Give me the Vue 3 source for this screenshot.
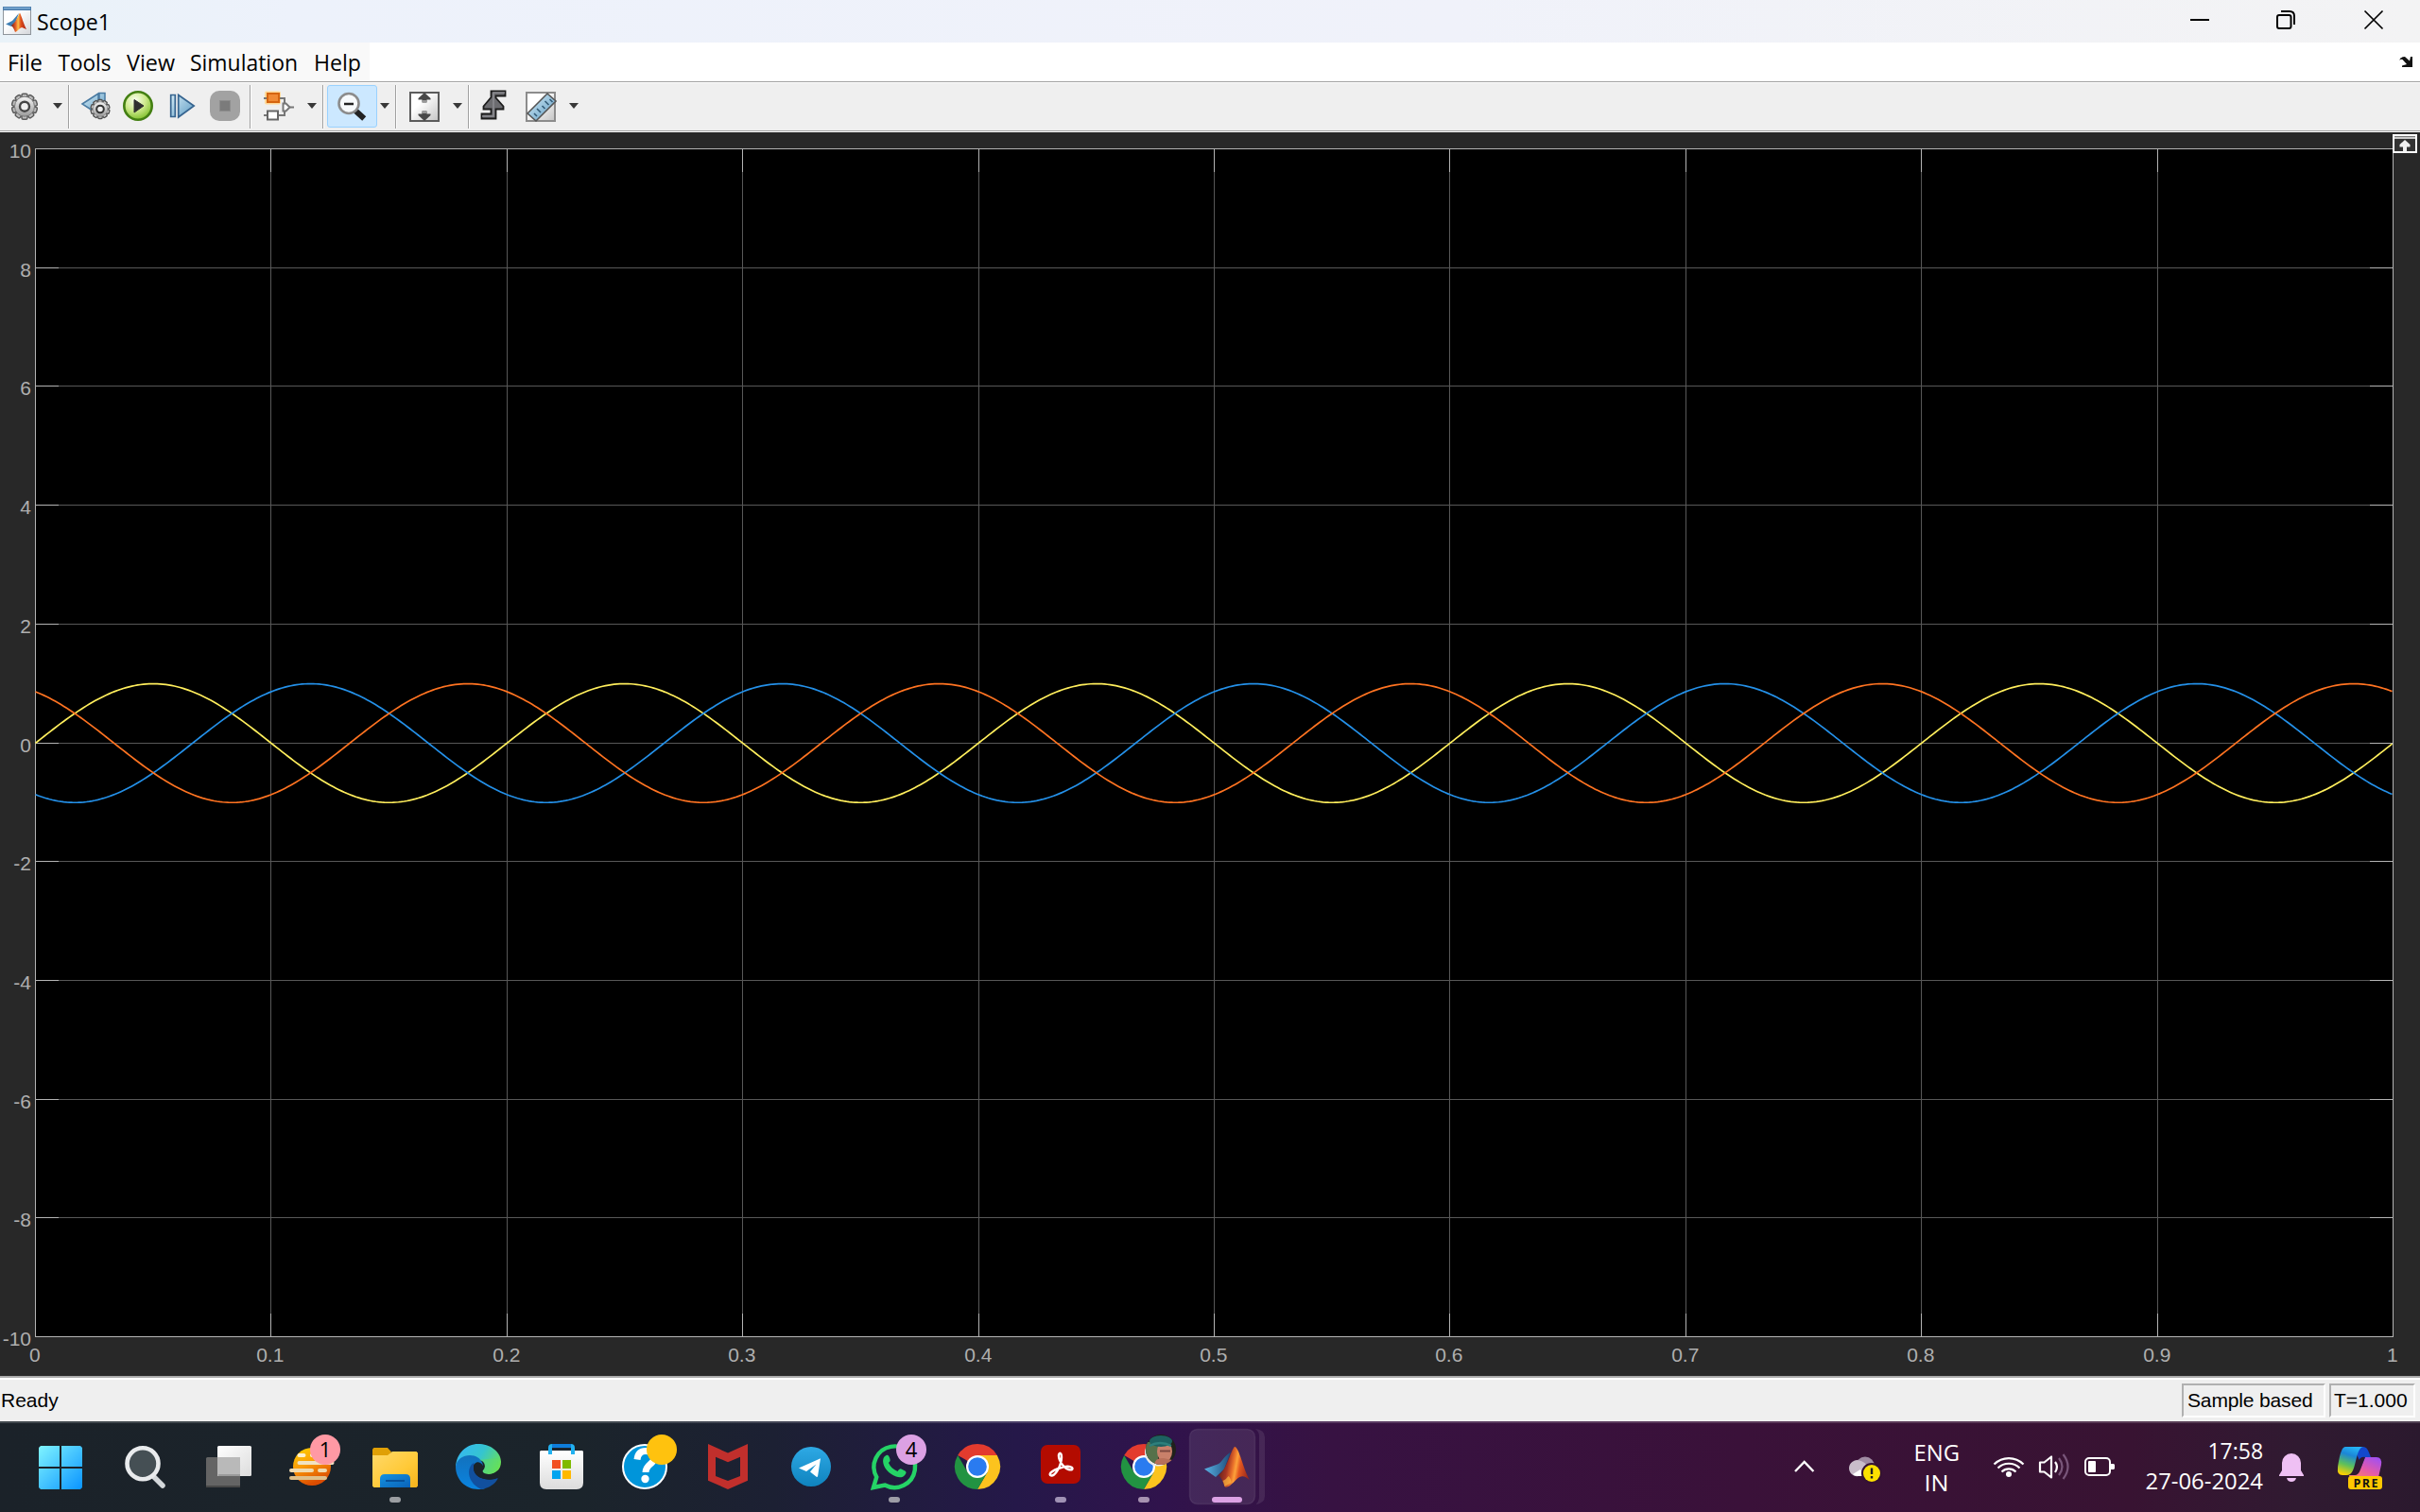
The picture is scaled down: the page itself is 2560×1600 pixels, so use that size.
<script setup>
const menus = [
  { label: 'File', x: 8, width: 60, len: 37 },
  { label: 'Tools', x: 1.5, width: 72, len: 56 },
  { label: 'View', x: 2, width: 69, len: 51 },
  { label: 'Simulation', x: 0, width: 131, len: 114 },
  { label: 'Help', x: 0, width: 59, len: 50 },
]

const left = 37
const right = 2531
const top = 17
const bottom = 1274
const mid = (top + bottom) / 2 + 0.9
const unit = (bottom - top) / 20

const xTicks = Array.from({ length: 11 }, (_, i) => ({
  x: Math.floor(left + 0.5 + i * 249.4) + 0.5,
  label: i === 0 ? '0' : i === 10 ? '1' : `0.${i}`,
}))
const yTicks = Array.from({ length: 11 }, (_, i) => ({
  y: Math.round(top + i * 2 * unit) + 0.5,
  label: String(10 - i * 2),
}))

function wave(phase) {
  const pts = []
  for (let x = 0; x <= right - left; x += 3) {
    const t = x / (right - left)
    const y = mid - unit * Math.sin(2 * Math.PI * 5 * t + phase)
    pts.push(`${(left + 0.5 + x).toFixed(1)},${y.toFixed(2)}`)
  }
  return pts.join(' ')
}
const waves = [
  { color: '#ffee5c', points: wave(0) },
  { color: '#2490e8', points: wave((-2 * Math.PI) / 3) },
  { color: '#ff7321', points: wave((2 * Math.PI) / 3) },
]
const teeth = Array.from({ length: 10 }, (_, i) => i * 36)
</script>

<template>
  <div class="screen">
    <header class="title">
      <svg class="app-icon" width="32" height="45" viewBox="2 0 32 45">
        <defs>
          <linearGradient id="win" x1="0" y1="0" x2="1" y2="1"><stop offset=".4" stop-color="#fff" /><stop offset="1" stop-color="#d4d6da" /></linearGradient>
          <linearGradient id="peak" x1="0" y1="0" x2="1" y2="0"><stop offset="0" stop-color="#7c1a10" /><stop offset=".3" stop-color="#e8622a" /><stop offset=".45" stop-color="#fbc04a" /><stop offset=".62" stop-color="#e0501c" /><stop offset="1" stop-color="#a81d12" /></linearGradient>
        </defs>
        <rect x="3.5" y="7.5" width="29" height="29" fill="url(#win)" stroke="#8f959b" />
        <rect x="3" y="7" width="30" height="4" fill="#4d7fae" /><rect x="4" y="8" width="28" height="1.3" fill="#7fb0d8" />
        <path d="M6 25.500l7-3.500 7-8-5 13-3 1z" fill="#3c7db2" />
        <path d="M12 27l4-4 5-9.500c2 4 4 12 7 17.500l-5-2c-3 1-4 4-7 5-1-3-2-5-4-7z" fill="url(#peak)" />
      </svg>
      <svg width="100" height="45"><text class="segoe" x="5" y="32" font-size="23.500" textLength="78" lengthAdjust="spacingAndGlyphs">Scope1</text></svg>
      <div class="grow"></div>
      <svg width="260" height="45" viewBox="2300 0 260 45" fill="none" stroke="#000" stroke-width="2">
        <path d="M2317 21h20" />
        <rect x="2409" y="16" width="14.500" height="14" rx="2" />
        <path d="M2413 12h9q5 0 5 5v9" />
        <path d="M2501.500 11.500l19 19M2520.500 11.500l-19 19" stroke-width="1.700" />
      </svg>
    </header>

    <nav class="menu">
      <div class="menu-items">
        <svg v-for="m in menus" :key="m.label" :width="m.width" height="41">
          <text class="segoe" :x="m.x" y="30" font-size="23.500" :textLength="m.len" lengthAdjust="spacingAndGlyphs">{{ m.label }}</text>
        </svg>
      </div>
      <svg width="32" height="41" viewBox="2528 45 32 41">
        <path d="M2538 64q1-4 6-4l5 4.500 1-4.500h2v11h-11v-1.500l5-1.500-4.500-5q-2-1-3.500 1z" fill="#111" />
      </svg>
    </nav>

    <div class="toolbar">
      <svg width="50" height="50" viewBox="0 88 50 50">
        <defs>
          <linearGradient id="metal" x1="0" y1="0" x2="0" y2="1"><stop offset="0" stop-color="#f5f5f5" /><stop offset="1" stop-color="#9a9a9a" /></linearGradient>
          <linearGradient id="sky" x1="0" y1="0" x2="1" y2="1"><stop offset="0" stop-color="#d3eaf5" /><stop offset="1" stop-color="#5e9cc4" /></linearGradient>
          <linearGradient id="box" x1="0" y1="0" x2="1" y2="1"><stop offset=".35" stop-color="#fff" /><stop offset="1" stop-color="#c4c4c4" /></linearGradient>
          <radialGradient id="green" cx=".4" cy=".3" r=".75"><stop offset="0" stop-color="#fbfff0" /><stop offset=".5" stop-color="#cde98b" /><stop offset="1" stop-color="#77bb22" /></radialGradient>
        </defs>
        <g transform="translate(26 112.700)">
          <rect v-for="a in teeth" :key="a" x="-3" y="-13.500" width="6" height="7" rx="1.500" fill="#bdbdbd" stroke="#5c5c5c" stroke-width="1.500" :transform="`rotate(${a})`" />
          <circle r="10.500" fill="url(#metal)" stroke="#777" stroke-width="1" />
          <circle r="5" fill="#efefef" stroke="#444" stroke-width="2.400" />
        </g>
      </svg>
      <div class="drop w22"><i></i></div>
      <div class="sep"></div>
      <svg width="50" height="50" viewBox="74 88 50 50">
        <path d="M87 110l17-11v22zM105 98.500h6v20h-6z" fill="url(#sky)" stroke="#4a7ba3" stroke-width="1.500" />
        <g transform="translate(106 115.500)">
          <rect v-for="a in teeth" :key="a" x="-2.200" y="-10" width="4.400" height="5" rx="1" fill="#ccc" stroke="#505050" stroke-width="1.300" :transform="`rotate(${a})`" />
          <circle r="7.800" fill="url(#metal)" stroke="#888" stroke-width=".8" />
          <circle r="3.800" fill="#efefef" stroke="#333" stroke-width="2" />
        </g>
      </svg>
      <svg width="44" height="50" viewBox="124 88 44 50">
        <circle cx="146" cy="112" r="14.700" fill="url(#green)" stroke="#437f12" stroke-width="2.600" />
        <path d="M142 105.500l10 6.500-10 7z" fill="#303030" stroke="#303030" stroke-width="1" />
      </svg>
      <svg width="46" height="50" viewBox="168 88 46 50">
        <path d="M180.700 100.500h4.600v23h-4.600zM188.700 100.500l16.500 11.500-16.500 12z" fill="url(#sky)" stroke="#36648f" stroke-width="1.700" />
      </svg>
      <svg width="50" height="50" viewBox="214 88 50 50">
        <rect x="222" y="96" width="32" height="32" rx="10" fill="#a2a2a2" />
        <rect x="232.500" y="106.500" width="11" height="11" fill="#7b7b7b" stroke="#8d8d8d" />
      </svg>
      <div class="sep"></div>
      <svg width="53" height="50" viewBox="266 88 53 50" fill="none">
        <rect x="280" y="96.500" width="17" height="14" rx="2" fill="#ffd896" />
        <path d="M279 104h4M295 104h6v6M279 122h4M295 122h6v-6M306 113.500h5" stroke="#777" stroke-width="2" />
        <rect x="283" y="99" width="12" height="9" fill="#f08a35" stroke="#d56410" stroke-width="2" />
        <rect x="283" y="117.500" width="11" height="9" fill="#fff" stroke="#666" stroke-width="2" />
        <path d="M299.500 109.500h3l4 4-4 4h-3z" fill="#fff" stroke="#777" stroke-width="2" />
      </svg>
      <div class="drop w22"><i></i></div>
      <div class="sep"></div>
      <div class="pressed">
        <svg width="51" height="43" viewBox="347 91 51 43">
          <path d="M377 118l6 5.500" stroke="#222" stroke-width="6" stroke-linecap="square" />
          <circle cx="369" cy="109.500" r="10.500" fill="#f7fafc" stroke="#8c8c8c" stroke-width="2.600" />
          <path d="M364 110h10" stroke="#222" stroke-width="2.500" />
        </svg>
      </div>
      <div class="drop w16"><i></i></div>
      <div class="sep"></div>
      <svg width="55" height="50" viewBox="420 88 55 50">
        <rect x="434" y="98" width="30" height="30" fill="url(#box)" stroke="#5c5c5c" stroke-width="2" />
        <path d="M449 98l6.500 6v1.500h-4v3h-5v-3h-4v-1.500zM449 128l6.500-6v-1.500h-4v-3h-5v3h-4v1.500z" fill="#484848" />
        <path d="M447 106h4v2h-4zM447 118h4v2h-4z" fill="#999" />
      </svg>
      <div class="drop w18"><i></i></div>
      <div class="sep"></div>
      <svg width="49" height="50" viewBox="497 88 49 50">
        <path d="M509.500 120.500h10v-5h-8v-3l8-9.500v-6.500h15v5h-10v2l8 9v3h-8v10h-15z" fill="#6c6c70" stroke="#1c1c1c" stroke-width="1.800" />
        <path d="M510 123h12v-25h12" fill="none" stroke="#8b8b90" stroke-width="1.600" />
      </svg>
      <svg width="52" height="50" viewBox="546 88 52 50">
        <rect x="557" y="98" width="30" height="30" fill="url(#box)" stroke="#8c8c8c" stroke-width="2" />
        <path d="M558 120l21-21 9 8-21 21z" fill="url(#sky)" stroke="#555" stroke-width="1.600" />
        <path d="M566 121l-3-3M570 117l-4-4M574.500 113l-3-3M578.500 109l-4-4M582.500 106l-3-3" stroke="#335b77" stroke-width="1.600" transform="translate(2 2)" />
      </svg>
      <div class="drop w18"><i></i></div>
    </div>

    <main class="scope">
      <svg width="2560" height="1316" viewBox="0 0 2560 1316">
        <rect :x="left" :y="top" :width="right - left + 1" :height="bottom - top + 1" fill="#000" />
        <g stroke="#585858" shape-rendering="crispEdges">
          <path v-for="t in xTicks" :key="t.x" :d="`M${t.x} ${top}V${bottom}`" />
          <path v-for="t in yTicks" :key="t.y" :d="`M${left} ${t.y}H${right}`" />
        </g>
        <g stroke="#b4b4b4" shape-rendering="crispEdges">
          <path v-for="t in xTicks" :key="t.x" :d="`M${t.x} ${top}v25M${t.x} ${bottom}v-24`" />
          <path v-for="t in yTicks" :key="t.y" :d="`M${left} ${t.y}h25M${right} ${t.y}h-24`" />
          <rect :x="left + 0.5" :y="top + 0.5" :width="right - left" :height="bottom - top" fill="none" />
        </g>
        <g fill="none" stroke-width="1.700">
          <polyline v-for="w in waves" :key="w.color" :points="w.points" :stroke="w.color" />
        </g>
        <g class="axis">
          <text v-for="t in yTicks" :key="t.y" x="33" :y="t.y + 9.500" text-anchor="end">{{ t.label }}</text>
          <text v-for="t in xTicks" :key="t.x" :x="t.x - 0.7" y="1301" text-anchor="middle">{{ t.label }}</text>
        </g>
        <g shape-rendering="crispEdges">
          <path d="M2531 2h26v20h-26z" fill="#fff" />
          <path d="M2533 7h22v13h-22z" fill="#333" /><path d="M2533 4h22v1h-22z" fill="#777" /><path d="M2533 5h22v2h-22z" fill="#c9c9c9" />
        </g>
        <path d="M2544 8l5.500 5v2.500h-3.500v5h-4v-5h-3.500v-2.500z" fill="#f0f0f0" />
      </svg>
    </main>

    <div class="status">
      <span class="ready">Ready</span>
      <span class="cell sample">Sample based</span>
      <span class="cell time">T=1.000</span>
    </div>

    <footer class="taskbar">
      <svg width="88" height="94">
        <defs>
          <linearGradient id="start" gradientUnits="userSpaceOnUse" x1="21" y1="24" x2="67" y2="70"><stop offset="0" stop-color="#80f4ff" /><stop offset="1" stop-color="#0a94ff" /></linearGradient>
        </defs>
        <path d="M23 24h20v22H21V26zM45 24h20l2 2v20H45zM21 48h22v22H23l-2-2zM45 48h22v20l-2 2H45z" fill="url(#start)" />
      </svg>
      <svg width="88" height="94">
        <path d="M54.500 56.500l9.500 9.500" stroke="#d3d7da" stroke-width="5.500" stroke-linecap="round" />
        <circle cx="43" cy="42.700" r="16.500" fill="#454f54" stroke="#e9ebed" stroke-width="4.600" />
      </svg>
      <svg width="88" height="94">
        <defs><linearGradient id="tv" x1="0" y1="0" x2="1" y2="1"><stop offset="0" stop-color="#fff" /><stop offset="1" stop-color="#dcdcdc" /></linearGradient></defs>
        <rect x="22" y="36" width="36" height="32" rx="1.500" fill="#646464" /><path d="M22 66h36v2h-36z" fill="#484848" />
        <rect x="34" y="24" width="36" height="32" rx="1.500" fill="url(#tv)" />
        <path d="M34 36h24v20h-23l-1-1z" fill="#b9b9b9" /><path d="M35 54h23v2h-23z" fill="#9a9a9a" />
      </svg>
      <svg width="88" height="94">
        <defs><linearGradient id="sun" x1="0" y1="0" x2=".4" y2="1"><stop offset="0" stop-color="#ffd400" /><stop offset=".5" stop-color="#fb9d0a" /><stop offset="1" stop-color="#dc4c00" /></linearGradient></defs>
        <circle cx="46" cy="46" r="20" fill="url(#sun)" />
        <g stroke-width="4" stroke-linecap="round"><path d="M32.500 34h5M46 34h8" stroke="#fdf1cf" /><path d="M32.500 42h35" stroke="#f1e3c2" /><path d="M24 50h22M54 50h6" stroke="#f0dbb0" /><path d="M24 58h36" stroke="#dfc08a" /></g>
        <circle cx="60" cy="28" r="16" fill="#ff99a4" />
        <text class="segoe" x="60" y="36" font-size="22" text-anchor="middle">1</text>
      </svg>
      <svg width="88" height="94">
        <defs>
          <linearGradient id="fold" x1="0" y1="0" x2="1" y2="1"><stop offset="0" stop-color="#ffd96a" /><stop offset=".6" stop-color="#ffc937" /><stop offset="1" stop-color="#f5b21b" /></linearGradient>
          <linearGradient id="fb" x1="0" y1="0" x2="1" y2="1"><stop offset="0" stop-color="#1492e0" /><stop offset="1" stop-color="#0a62b8" /></linearGradient>
        </defs>
        <path d="M23.500 26H38l4 4.500-4 6H22v-9z" fill="#e0a006" />
        <path d="M22 34h16l5-4h25.500l1.500 1.500v35l-1.500 1.500h-45l-1.500-1.500z" fill="url(#fold)" />
        <path d="M30 68v-9q0-5 5-5h22q5 0 5 5v9z" fill="url(#fb)" /><path d="M36 61h20" stroke="#06509a" stroke-width="2" />
        <rect x="40" y="78" width="12" height="6" rx="3" fill="#9b9ea2" />
      </svg>
      <svg width="88" height="94">
        <defs>
          <linearGradient id="e1" x1="0" y1=".3" x2="1" y2=".7"><stop offset="0" stop-color="#35b8f1" /><stop offset=".5" stop-color="#35c4d0" /><stop offset="1" stop-color="#6be251" /></linearGradient>
          <linearGradient id="e2" x1="0" y1="0" x2="0" y2="1"><stop offset="0" stop-color="#1271bd" /><stop offset="1" stop-color="#0a84e0" /></linearGradient>
        </defs>
        <path d="M22 46C23 32 33 22 46 22s24 9 24 19c0 8-6 13-13 13-6 0-7-3-6-4 4-4 2-11-5-11z" fill="url(#e1)" />
        <path d="M22 46c1-8 8-12 15-12 9 0 14 6 14 12-3-5-13-5-14 6 0 8 7 14 16 17-2 .7-4 1-7 1-14 0-24-11-24-24z" fill="url(#e2)" />
        <path d="M41 42c-8 5-7 21 8 28 8-1 15-6 17.500-11 .3-1-.5-1.500-1.500-1-10 4-24 0-24-11 0-2 1-4 0-5z" fill="#11509f" />
        <path d="M41 47c0-5 4-7 7-5 3 1.500 4 4.500 2.500 7-1.500 2 0 4.500 6 5 4 .2 8-1.500 10-4v8c-9 4-25.500 1-25.500-11z" fill="#1b232a" />
        <path d="M51 50c4-5 1-11-5-11l20-2c3 9-1 17-9 17-6 0-7-3-6-4z" fill="#5fdd62" opacity=".5" />
      </svg>
      <svg width="88" height="94">
        <defs><linearGradient id="st" x1="0" y1="0" x2="0" y2="1"><stop offset="0" stop-color="#fff" /><stop offset="1" stop-color="#dcdcdc" /></linearGradient></defs>
        <path d="M24 29h44l1 1v33q0 7-7 7H30q-7 0-7-7V30z" fill="url(#st)" />
        <path d="M34 33v-7q0-2 2-2h20q2 0 2 2v7" fill="none" stroke="#21b1f0" stroke-width="4" /><path d="M36 24h20" stroke="#0e7ddb" stroke-width="4" />
        <path d="M36 39h9v9h-9z" fill="#f25022" /><path d="M47 39h9v9h-9z" fill="#7fba00" /><path d="M36 50h9v9h-9z" fill="#00a4ef" /><path d="M47 50h9v9h-9z" fill="#ffb900" />
      </svg>
      <svg width="88" height="94">
        <circle cx="46" cy="46" r="23" fill="#0095da" stroke="#fff" stroke-width="2" />
        <path d="M38 38.500q1-9 9-9 9 0 9 7.500c0 6-9 6.500-9 15" fill="none" stroke="#fff" stroke-width="7" /><circle cx="46.500" cy="59" r="4.200" fill="#fff" />
        <circle cx="64" cy="28" r="16" fill="#ffc20e" />
      </svg>
      <svg width="88" height="94">
        <path fill-rule="evenodd" d="M25 22l21 9.500L67 22v38.700L46 70l-21-9.300zM33 35.700V56l13 5 13-5V35.700l-13 5.600z" fill="#c12f2c" />
      </svg>
      <svg width="88" height="94">
        <defs><linearGradient id="tg" x1="0" y1="0" x2="0" y2="1"><stop offset="0" stop-color="#2ea9e5" /><stop offset="1" stop-color="#0f83be" /></linearGradient></defs>
        <circle cx="46" cy="46" r="21" fill="url(#tg)" />
        <path d="M33 47.500L56 37.300l-3 19.200-1 .5-7-5.500 6.500-8-10.500 7.500z" fill="#fff" />
      </svg>
      <svg width="88" height="94">
        <path d="M24 68l3.300-11A21.800 21.800 0 1 1 36 65.500z" fill="none" stroke="#25d366" stroke-width="4.400" />
        <path d="M35.500 35.500c3-3 4.500-2 5.500 1 1 3 1 3.500-1 5.500 1.500 4 5 7 9.500 9 2-3 3-3.500 5-2 4 2 5 2.500 3 5.500-2 3-6 3.500-9.500 2C40 53 36 48.500 34.500 43c-.7-3-.5-5.500 1-7.500z" fill="#25d366" />
        <circle cx="64" cy="28" r="16" fill="#dca1e4" />
        <text class="segoe" x="64" y="36" font-size="22" text-anchor="middle">4</text>
        <rect x="40" y="78" width="12" height="6" rx="3" fill="#9d9da6" />
      </svg>
      <svg v-for="n in 2" :key="n" width="88" height="94" :class="n === 1 ? 'o0' : 'o2'">
        <path d="M46 46L25.200 34A24 24 0 0 1 66.800 34z" fill="#e33b2e" />
        <path d="M46 34h20.800A24 24 0 0 1 46 70l10.400-18z" fill="#fcc31e" />
        <path d="M56.400 52L46 70A24 24 0 0 1 25.200 34l10.400 18z" fill="#229342" />
        <circle cx="46" cy="46" r="12" fill="#fff" /><circle cx="46" cy="46" r="9.800" fill="#2a7bf0" />
        <g v-if="n === 2">
          <clipPath id="av"><circle cx="64" cy="28" r="16" /></clipPath>
          <circle cx="61" cy="31.500" r="14" fill="#e9e9e9" />
          <g clip-path="url(#av)">
            <path d="M48 12h32v32h-32z" fill="#20211c" /><path d="M48 20h13v24h-13z" fill="#55714a" />
            <ellipse cx="68" cy="30" rx="8" ry="11" fill="#c9806a" /><path d="M57 44q1-8 10-7l9 2v6h-19z" fill="#b8705a" />
            <ellipse cx="64" cy="19" rx="12" ry="6" fill="#1d6161" /><path d="M52 24q11-6 23 0" stroke="#2d7f7b" stroke-width="2.500" fill="none" />
            <path d="M63 29.500h11" stroke="#7d4940" stroke-width="2" />
          </g>
          <rect x="40" y="78" width="12" height="6" rx="3" fill="#a792b1" />
        </g>
      </svg>
      <svg class="o1" width="88" height="94">
        <rect x="25" y="23" width="42" height="41" rx="7" fill="#b30b00" />
        <path d="M35 55c-3-4 18-12 23-8 3 4-8 4-13-8-3-8 2-10 2-3 0 8-7 22-12 19z" fill="none" stroke="#fff" stroke-width="2.400" />
        <rect x="40" y="78" width="12" height="6" rx="3" fill="#a092b5" />
      </svg>
      <svg class="o3" width="90" height="94">
        <path d="M76 6q10 1 10 9v62q0 8-10 9 4-3 4-8V14q0-5-4-8z" fill="#fff" opacity=".09" />
        <rect x="6.500" y="6.500" width="69" height="79" rx="8" fill="#fff" fill-opacity=".09" stroke="#fff" stroke-opacity=".08" stroke-width="1.500" />
        <defs>
          <linearGradient id="m1" gradientUnits="userSpaceOnUse" x1="37" y1="50" x2="70" y2="56"><stop offset="0" stop-color="#64241a" /><stop offset=".25" stop-color="#a53423" /><stop offset=".42" stop-color="#e8702a" /><stop offset=".52" stop-color="#fda23a" /><stop offset=".64" stop-color="#e2571f" /><stop offset="1" stop-color="#8d201b" /></linearGradient>
          <linearGradient id="m2" x1="0" y1="0" x2="1" y2="0"><stop offset="0" stop-color="#59b2e4" /><stop offset="1" stop-color="#1d4a78" /></linearGradient>
        </defs>
        <path d="M22 48.500l14-5c4-1 6-8 14-13l-7 18-9 8.500z" fill="url(#m2)" />
        <path d="M37 55c9-6 12-24 17-30.300 5 1 9 24 16 35.300-6-5-9-5-14-.500-4 4-8 8.500-12 8.200-2-4-3-9-7-12.700z" fill="url(#m1)" />
        <path d="M43.500 67c-1-4-1.500-5-2-6 3-1 4-3 6-5 2 2 3 4 3 7z" fill="#fbb840" opacity=".7" />
        <rect x="30" y="78" width="32" height="6" rx="3" fill="#dca1e4" />
      </svg>

      <div class="tray">
        <svg width="56" height="94" viewBox="1880 1506 56 94"><path d="M1899 1557l9.700-10 9.700 10" fill="none" stroke="#fff" stroke-width="2.400" /></svg>
        <svg width="64" height="94" viewBox="1936 1506 64 94">
          <circle cx="1973" cy="1551.500" r="10" fill="#a08ca3" />
          <path d="M1966 1562a8.500 8.500 0 1 1 1-16.500q6 1 10 8v8.500z" fill="#c9bdca" /><path d="M1960 1560l8-5 4 7h-6q-4 0-6-2z" fill="#fff" />
          <circle cx="1980" cy="1559" r="11" fill="#351232" /><circle cx="1980" cy="1559" r="9" fill="#fce100" />
          <path d="M1980 1553.500v6.500M1980 1562v2.500" stroke="#222" stroke-width="2.400" />
        </svg>
        <svg width="96" height="94" viewBox="2000 1506 96 94" fill="#fff" font-size="23.500">
          <text class="segoe" x="2024.500" y="1546" textLength="48.500" lengthAdjust="spacingAndGlyphs">ENG</text>
          <text class="segoe" x="2035.500" y="1578" textLength="26" lengthAdjust="spacingAndGlyphs">IN</text>
        </svg>
        <svg width="56" height="94" viewBox="2096 1506 56 94" fill="none" stroke="#fff" stroke-width="2.200">
          <circle cx="2125" cy="1560" r="3" fill="#fff" stroke="none" />
          <path d="M2109.500 1549.500a22 22 0 0 1 31 0M2113.500 1553.500a16.300 16.300 0 0 1 23 0M2117.500 1557.500a10.600 10.600 0 0 1 15 0" />
        </svg>
        <svg width="48" height="94" viewBox="2152 1506 48 94" fill="none" stroke="#fff" stroke-width="2.200">
          <path d="M2158 1547.500h4.500l7.500-6v22l-7.500-6h-4.500z" stroke-linejoin="round" /><path d="M2174 1547q4 5 0 11" />
          <path d="M2178 1543q7 9 0 18M2182.500 1539q10 13 0 26" stroke="#79567a" />
        </svg>
        <svg width="50" height="94" viewBox="2200 1506 50 94">
          <rect x="2206" y="1543" width="26" height="18" rx="4" fill="none" stroke="#fff" stroke-width="2" /><rect x="2209" y="1546" width="8" height="12" rx="1" fill="#fff" /><path d="M2233 1549h3l1 1v4l-1 1h-3z" fill="#fff" />
        </svg>
        <svg width="146" height="94" viewBox="2250 1506 146 94" fill="#fff" font-size="23.500">
          <text class="segoe" x="2335.500" y="1544" textLength="58.500" lengthAdjust="spacingAndGlyphs">17:58</text>
          <text class="segoe" x="2269.500" y="1575.500" textLength="124.500" lengthAdjust="spacingAndGlyphs">27-06-2024</text>
        </svg>
        <svg width="64" height="94" viewBox="2396 1506 64 94" fill="#efc0f4">
          <path d="M2411 1561l3-5v-8a10 10 0 0 1 20 0v8l3 5v1h-26zM2419 1564h10q-1 4-5 4t-5-4z" />
        </svg>
        <svg width="100" height="94" viewBox="2460 1506 100 94">
          <defs>
            <linearGradient id="c1" x1=".6" y1="0" x2=".3" y2="1"><stop offset="0" stop-color="#25b4f5" /><stop offset=".3" stop-color="#1c86d6" /><stop offset=".65" stop-color="#5dc05b" /><stop offset="1" stop-color="#ffd000" /></linearGradient>
            <linearGradient id="c2" x1=".8" y1="0" x2=".2" y2="1"><stop offset="0" stop-color="#a350f0" /><stop offset=".5" stop-color="#e45aa8" /><stop offset="1" stop-color="#ff8a55" /></linearGradient>
          </defs>
          <path d="M2490 1531h10q4 0 6 6l2 5h6l-8 4-8 5z" fill="#1248cc" />
          <path d="M2481 1531h19c-7 1-7 17-11 25q-2 5-7 5h-4q-6 0-5-8c1-6 3-22 8-22z" fill="url(#c1)" />
          <path d="M2502 1542h12q6 0 5 8l-4 18h-25q-4-1-5-7c10 1 11-5 17-19z" fill="url(#c2)" />
          <path d="M2494 1547q3-6 8-5l-5 13q-2 6-6 6h-5q4-3 8-14z" fill="#2e1930" />
          <rect x="2484" y="1562" width="36" height="14" rx="3" fill="#ffc800" />
          <text class="segoe" x="2489.500" y="1573.500" font-size="12.500" font-weight="700" textLength="26" lengthAdjust="spacing" fill="#111">PRE</text>
        </svg>
      </div>
    </footer>
  </div>
</template>

<style>
body { margin: 0; overflow: hidden; }
</style>

<style scoped>
.screen { width: 2560px; height: 1600px; display: flex; flex-direction: column; background: #efefef; }
svg { display: block; flex: none; }
.segoe { font-family: "Open Sans", "Noto Sans", sans-serif; }
.title { display: flex; height: 45px; padding-left: 2px; background: linear-gradient(90deg, #e9f2f8 0, #edf2fb 12%, #f0f2fa 60%, #f3f3f4 100%); }
.grow { flex: 1; }
.menu { display: flex; justify-content: space-between; height: 41px; background: #fff; }
.menu-items { display: flex; background: #f9f9f9; }
.toolbar { display: flex; height: 50px; background: #efefef; border-top: 1px solid #a0a0a0; border-bottom: 1px solid #a0a0a0; box-shadow: inset 0 1px #fff, 0 1px #fff; padding-top: 1px; margin-bottom: 1px; }
.sep { width: 1px; height: 46px; margin-top: 2px; background: #a0a0a0; border-right: 1px solid #fff; flex: none; }
.drop { display: flex; align-items: center; justify-content: center; height: 48px; flex: none; }
.drop i { width: 0; border: 5px solid transparent; border-top: 6px solid #383838; border-bottom: 0; }
.w22 { width: 22px; }
.w16 { width: 16px; margin-right: 3px; }
.w18 { width: 18px; margin-right: 2px; }
.pressed { width: 51px; height: 43px; margin: 2px 0 0 3px; background: #cce8ff; border: 1px solid #99d1ff; border-radius: 3px; flex: none; }
.scope { height: 1316px; background: #282828; }
.axis { font: 21px "Liberation Sans", Arial, sans-serif; fill: #afafaf; }
.status { box-sizing: border-box; height: 48px; display: flex; align-items: flex-start; background: #efefef; border-top: 2px solid #aaa; box-shadow: inset 0 2px #fff; font: 21px/34px "Liberation Sans", Arial, sans-serif; color: #000; }
.ready { flex: 1; padding: 7px 0 0 1px; }
.cell { box-sizing: border-box; height: 36px; margin-top: 6px; padding-left: 4px; border: 2px solid; border-color: #b0b0b0 #fff #fff #b0b0b0; line-height: 32px; white-space: nowrap; }
.sample { width: 152px; margin-right: 4px; letter-spacing: -.15px; }
.time { width: 91px; padding-left: 3px; margin-right: 5px; }
.taskbar { box-sizing: border-box; height: 96px; display: flex; padding-left: 20px; border-top: 2px solid rgba(255, 255, 255, .17); background: linear-gradient(90deg, #1b2229 0, #1b242b 24%, #1c2033 32%, #251849 42%, #30134c 48%, #371242 55%, #3a1139 72%, #381332 88%, #301a31 95%, #2b192e 100%); background-origin: border-box; }
.o0 { order: 0; }
.o1 { order: 1; }
.o2 { order: 2; }
.o3 { order: 3; }
.tray { order: 4; display: flex; margin-left: auto; }
</style>
